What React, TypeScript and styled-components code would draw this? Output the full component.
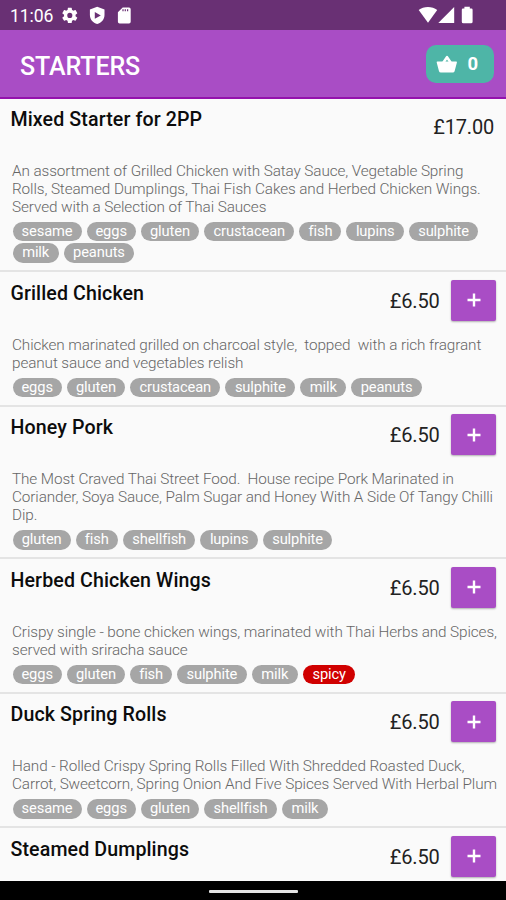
import React from "react";
import styled, { createGlobalStyle } from "styled-components";

const GlobalStyle = createGlobalStyle`
  * { box-sizing: border-box; }
  body { margin: 0; background: #fafafa; font-family: Roboto, "Liberation Sans", sans-serif; }
`;

const Screen = styled.div`
  width: 506px;
  height: 900px;
  display: flex;
  flex-direction: column;
  overflow: hidden;
  background: #fafafa;
`;

const StatusBar = styled.div`
  flex: none;
  display: flex;
  justify-content: space-between;
  height: 30px;
  padding: 0 30px 0 10px;
  background: #693074;
  color: #fff;
`;

const Clock = styled.span`
  width: 51px;
  font-size: 17.6px;
  line-height: 32px;
  letter-spacing: -0.1px;
`;

const StatusGroup = styled.div`
  display: flex;
  svg { display: block; }
`;

const AppBar = styled.header`
  flex: none;
  display: flex;
  align-items: center;
  justify-content: space-between;
  height: 69px;
  padding: 0 12px 0 20px;
  background: #a94dc5;
  border-bottom: 2px solid #9412ad;
`;

const Title = styled.h1`
  margin: 6px 0 0;
  font-size: 25px;
  line-height: 30px;
  font-weight: 500;
  letter-spacing: -0.1px;
  color: #fff;
`;

const BasketButton = styled.button`
  display: flex;
  align-items: center;
  width: 68px;
  height: 38px;
  margin-top: 1px;
  padding: 0 0 0 9.5px;
  border: 0;
  border-radius: 10px;
  background: #4eb5a7;
  color: #fff;
  font: 700 18.5px/38px Roboto, sans-serif;
  svg { display: block; margin-right: 10px; }
`;

const Menu = styled.main`
  flex: 1;
  min-height: 0;
  overflow: hidden;
  margin-top: -0.6px;
`;

const Dish = styled.section`
  padding: 0 0 7.6px;
  border-bottom: 2px solid #e4e4e4;
`;

const DishHead = styled.div`
  display: flex;
  align-items: flex-start;
  height: 64.5px;
  padding: 7.4px 10px 0 10.5px;
`;

const DishName = styled.h2`
  flex: 1;
  margin: 2px 0 0;
  font-size: 19.6px;
  line-height: 24px;
  font-weight: 500;
  letter-spacing: 0.11px;
  color: #0c0c0c;
  white-space: nowrap;
`;

const Price = styled.span<{ $alone?: boolean }>`
  font-size: 20px;
  line-height: 42px;
  letter-spacing: -0.2px;
  color: #222;
  margin-right: ${(p) => (p.$alone ? "2px" : "11.5px")};
`;

const AddButton = styled.button`
  display: flex;
  align-items: center;
  justify-content: center;
  width: 45px;
  height: 41px;
  padding: 0;
  border: 0;
  border-radius: 2px;
  background: #a94dc5;
  box-shadow: 0 1px 2px rgba(0, 0, 0, 0.3);
`;

const Description = styled.div`
  padding-left: 12px;
  color: #666;
  font-size: 15.3px;
  line-height: 17.87px;
  font-weight: 300;
  letter-spacing: -0.1px;
  white-space: pre;
`;

const Tags = styled.div`
  display: flex;
  flex-wrap: wrap;
  gap: 2px 5px;
  padding: 5.1px 20px 0 12.5px;
`;

const Tag = styled.span<{ $hot?: boolean; $w: number }>`
  width: ${(p) => p.$w}px;
  height: 19.6px;
  border-radius: 10px;
  background: ${(p) => (p.$hot ? "#d00000" : "#a6a6a6")};
  color: #fff;
  font-size: 14.7px;
  line-height: 18.5px;
  letter-spacing: -0.12px;
  text-align: center;
`;

const NavBar = styled.footer`
  flex: none;
  display: flex;
  justify-content: center;
  height: 19px;
  padding-top: 9px;
  background: #000;
`;

const NavHandle = styled.div`
  width: 89px;
  height: 3px;
  border-radius: 1px;
  background: #e4e4e4;
`;

const tagWidths: Record<string, number> = {
  sesame: 69, eggs: 49.3, gluten: 58.3, crustacean: 90.4, fish: 42, lupins: 57.3,
  sulphite: 69.6, milk: 46.3, peanuts: 70.3, shellfish: 72.7, spicy: 52.5,
};

type Item = { name: string; price: string; lines: string[]; tags: string[]; fixed?: boolean };

const items: Item[] = [
  {
    name: "Mixed Starter for 2PP",
    price: "£17.00",
    fixed: true,
    lines: [
      "An assortment of Grilled Chicken with Satay Sauce, Vegetable Spring",
      "Rolls, Steamed Dumplings, Thai Fish Cakes and Herbed Chicken Wings.",
      "Served with a Selection of Thai Sauces",
    ],
    tags: ["sesame", "eggs", "gluten", "crustacean", "fish", "lupins", "sulphite", "milk", "peanuts"],
  },
  {
    name: "Grilled Chicken",
    price: "£6.50",
    lines: [
      "Chicken marinated grilled on charcoal style,  topped  with a rich fragrant",
      "peanut sauce and vegetables relish",
    ],
    tags: ["eggs", "gluten", "crustacean", "sulphite", "milk", "peanuts"],
  },
  {
    name: "Honey Pork",
    price: "£6.50",
    lines: [
      "The Most Craved Thai Street Food.  House recipe Pork Marinated in",
      "Coriander, Soya Sauce, Palm Sugar and Honey With A Side Of Tangy Chilli",
      "Dip.",
    ],
    tags: ["gluten", "fish", "shellfish", "lupins", "sulphite"],
  },
  {
    name: "Herbed Chicken Wings",
    price: "£6.50",
    lines: [
      "Crispy single - bone chicken wings, marinated with Thai Herbs and Spices,",
      "served with sriracha sauce",
    ],
    tags: ["eggs", "gluten", "fish", "sulphite", "milk", "spicy"],
  },
  {
    name: "Duck Spring Rolls",
    price: "£6.50",
    lines: [
      "Hand - Rolled Crispy Spring Rolls Filled With Shredded Roasted Duck,",
      "Carrot, Sweetcorn, Spring Onion And Five Spices Served With Herbal Plum",
    ],
    tags: ["sesame", "eggs", "gluten", "shellfish", "milk"],
  },
  { name: "Steamed Dumplings", price: "£6.50", lines: [], tags: [] },
];

const SystemIcons = () => (
  <svg width="74" height="30" viewBox="61 0 74 30" fill="#fff">
    <g transform="translate(60.2 5.8) scale(0.8)">
      <path d="M19.14 12.94c.04-.3.06-.61.06-.94s-.02-.64-.07-.94l2.03-1.58a.49.49 0 0 0 .12-.61l-1.92-3.32a.488.488 0 0 0-.59-.22l-2.39.96c-.5-.38-1.03-.7-1.62-.94l-.36-2.54a.484.484 0 0 0-.48-.41h-3.84c-.24 0-.43.17-.47.41l-.36 2.54c-.59.24-1.13.57-1.62.94l-2.39-.96c-.22-.08-.47 0-.59.22L2.74 8.87c-.12.21-.08.47.12.61l2.03 1.58c-.05.3-.09.63-.09.94s.02.64.07.94l-2.03 1.58a.49.49 0 0 0-.12.61l1.92 3.32c.12.22.37.29.59.22l2.39-.96c.5.38 1.03.7 1.62.94l.36 2.54c.05.24.24.41.48.41h3.84c.24 0 .44-.17.47-.41l.36-2.54c.59-.24 1.13-.56 1.62-.94l2.39.96c.22.08.47 0 .59-.22l1.92-3.32c.12-.22.07-.47-.12-.61l-2.01-1.58zM12 15.2A3.2 3.2 0 1 1 12 8.8a3.2 3.2 0 0 1 0 6.4z" />
    </g>
    <path fillRule="evenodd" d="M97.2 6.8 104.5 9.5V15c0 4.3-3 7.7-7.3 9.1C92.9 22.7 89.9 19.3 89.9 15V9.5zM94.8 12v6.8l6-3.4z" />
    <path fillRule="evenodd" d="M122.7 7.5h6.3a1.7 1.7 0 0 1 1.7 1.7v12.6a1.7 1.7 0 0 1-1.7 1.7h-9.4a1.7 1.7 0 0 1-1.7-1.7v-9.5zM122.4 9.3v1.9h1.2V9.3zM124.7 9.3v1.9h1.2V9.3zM127 9.3v1.9h1.2V9.3z" />
  </svg>
);

const SignalIcons = () => (
  <svg width="58" height="30" viewBox="418 0 58 30" fill="#fff">
    <path d="M418.7 10C423.5 5.9 432.3 5.9 437.2 10L428 22.7z" />
    <path d="M438.3 23 454.2 7v16z" />
    <path d="M464.4 6.7h5.4V8.5h1.6a1.2 1.2 0 0 1 1.2 1.2v12a1.6 1.6 0 0 1-1.6 1.6h-7.6a1.6 1.6 0 0 1-1.6-1.6v-12a1.2 1.2 0 0 1 1.2-1.2h1.4z" />
  </svg>
);

const BasketIcon = () => (
  <svg width="22" height="20" viewBox="0 0 22 20">
    <path d="M7.4 8.5 11 3.2 14.6 8.5" fill="none" stroke="#fff" strokeWidth="2.6" strokeLinejoin="round" />
    <path d="M1.5 7.5h18.6a.8.8 0 0 1 .8 1l-2.3 8.7a1.9 1.9 0 0 1-1.8 1.3H4.8A1.9 1.9 0 0 1 3 17.2L.7 8.5a.8.8 0 0 1 .8-1z" fill="#fff" />
  </svg>
);

const PlusIcon = () => (
  <svg width="14" height="14" viewBox="0 0 14 14">
    <path d="M7 .5v13M.5 7h13" stroke="#fff" strokeWidth="2.4" />
  </svg>
);

export default function App() {
  return (
    <Screen>
      <GlobalStyle />
      <StatusBar>
        <StatusGroup>
          <Clock>11:06</Clock>
          <SystemIcons />
        </StatusGroup>
        <StatusGroup>
          <SignalIcons />
        </StatusGroup>
      </StatusBar>
      <AppBar>
        <Title>STARTERS</Title>
        <BasketButton>
          <BasketIcon />0
        </BasketButton>
      </AppBar>
      <Menu>
        {items.map((item) => (
          <Dish key={item.name}>
            <DishHead>
              <DishName>{item.name}</DishName>
              <Price $alone={item.fixed}>{item.price}</Price>
              {!item.fixed && (
                <AddButton aria-label="Add">
                  <PlusIcon />
                </AddButton>
              )}
            </DishHead>
            <Description>
              {item.lines.map((text) => (
                <div key={text}>{text}</div>
              ))}
            </Description>
            <Tags>
              {item.tags.map((tag) => (
                <Tag key={tag} $w={tagWidths[tag]} $hot={tag === "spicy"}>{tag}</Tag>
              ))}
            </Tags>
          </Dish>
        ))}
      </Menu>
      <NavBar>
        <NavHandle />
      </NavBar>
    </Screen>
  );
}
